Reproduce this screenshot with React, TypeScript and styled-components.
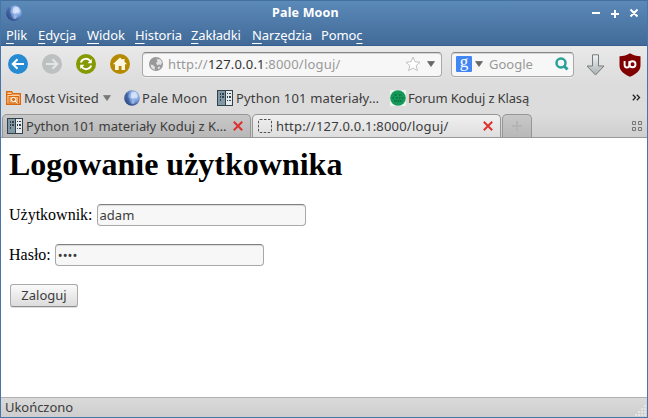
import React from 'react';
import styled, { createGlobalStyle } from 'styled-components';

const Global = createGlobalStyle`
  * { box-sizing: border-box; }
  body { margin: 0; overflow: hidden; }
`;

const Window = styled.div`
  width: 648px;
  height: 418px;
  display: flex;
  flex-direction: column;
  background: #fff;
  border: solid #4675aa;
  border-width: 0 1px 1px;
  font: 13px 'Noto Sans', sans-serif;
  color: #3c3c3c;
  overflow: hidden;
`;

const Header = styled.header`
  height: 46px;
  flex: none;
  background: linear-gradient(#5b89b8, #416a98);
  border-top: 1px solid #44709f;
  border-bottom: 1px solid #365f90;
  color: #fff;
`;

const TitleBar = styled.div`
  height: 23px;
  display: grid;
  grid-template-columns: 68px 1fr 100px;
  align-items: center;
  padding: 0 9px 0 5px;
`;

const Title = styled.div`
  text-align: center;
  font-weight: 700;
  font-size: 12.5px;
  padding-right: 1px;
  letter-spacing: 0.17px;
`;

const Controls = styled.div`
  display: flex;
  justify-content: flex-end;
`;

const Label = styled.span<{ $w: number; $ls?: number }>`
  width: ${(p) => p.$w}px;
  flex: none;
  white-space: nowrap;
  letter-spacing: ${(p) => p.$ls ?? 0}px;
  line-height: 18px;
`;

const MenuBar = styled.nav`
  height: 21px;
  display: flex;
  align-items: center;
  gap: 10px;
  padding-left: 5px;
  u { text-underline-offset: 3px; text-decoration-thickness: 1px; text-decoration-skip-ink: none; }
`;

const Toolbar = styled.div`
  height: 38px;
  flex: none;
  display: flex;
  align-items: center;
  padding: 0 5px 1px 7px;
  background: linear-gradient(#e9e9e9, #dcdcdc);
`;

const NavButtons = styled.div`
  display: flex;
  gap: 14px;
  width: 134px;
  flex: none;
  padding-bottom: 1px;
  svg { display: block; }
`;

const Field = styled.div<{ $w: number; $inset?: number }>`
  width: ${(p) => p.$w}px;
  height: 25px;
  flex: none;
  display: flex;
  align-items: center;
  background: #f7f7f7;
  border: 1px solid #a8a8a8;
  border-top-color: #858585;
  border-radius: 4px;
  box-shadow: inset 0 1px 0 #d5d5d5, 0 1px 0 #ececec;
  padding-left: ${(p) => p.$inset ?? 6}px;
  padding-bottom: 1px;
  color: #999;
  svg { flex: none; display: block; }
`;

const Host = styled.span`
  color: #333;
`;

const Bookmarks = styled.div`
  height: 30px;
  flex: none;
  display: flex;
  align-items: center;
  padding: 0 6px 3px 5px;
  background: #dcdcdc;
  svg { flex: none; }
`;

const Bookmark = styled.div<{ $w: number; $gap?: number }>`
  width: ${(p) => p.$w}px;
  flex: none;
  display: flex;
  align-items: center;
  gap: ${(p) => p.$gap ?? 3}px;
`;

const Overflow = styled.svg`
  margin-left: auto;
  margin-bottom: 1px;
`;

const TabStrip = styled.div`
  height: 24px;
  flex: none;
  display: flex;
  align-items: stretch;
  padding-left: 1px;
  background: linear-gradient(#dcdcdc, #cfcfcf);
  border-bottom: 1px solid #999;
`;

const Tab = styled.div<{ $w: number; $active?: boolean }>`
  width: ${(p) => p.$w}px;
  flex: none;
  display: flex;
  align-items: center;
  padding-left: 4px;
  margin-right: 1px;
  border: 1px solid #969696;
  border-bottom: 0;
  border-radius: 5px 5px 0 0;
  background: ${(p) => (p.$active ? 'linear-gradient(#f0f0f0, #dedede)' : 'linear-gradient(#c8c8c8, #b8b8b8)')};
  svg { flex: none; }
`;

const NewTab = styled(Tab)`
  padding: 0;
  justify-content: center;
`;

const GridIcon = styled.div`
  margin-left: auto;
  padding: 7px 5px 0 0;
  svg { display: block; }
`;

const Page = styled.main`
  flex: 1;
  padding: 0 8px;
  color: #000;
  font: 16px/20px 'Liberation Serif', serif;
`;

const Heading = styled.h1`
  margin: 8px 0 0;
  font-size: 32px;
  line-height: 37px;
`;

const Row = styled.div<{ $top: number }>`
  display: flex;
  align-items: center;
  gap: 4px;
  height: 22px;
  margin-top: ${(p) => p.$top}px;
`;

const Input = styled.input`
  width: 209px;
  height: 22px;
  padding: 0 2px;
  outline: 0;
  background: #f7f7f7;
  border: 1px solid #a8a8a8;
  border-top-color: #808080;
  border-radius: 4px;
  box-shadow: inset 0 1px 0 #dcdcdc;
  color: #3c3c3c;
  font: 13px 'Noto Sans', sans-serif;
`;

const Submit = styled.button`
  display: block;
  width: 68px;
  height: 23px;
  margin: 18px 0 0 1px;
  padding: 0 0 1px;
  background: linear-gradient(#fafafa, #dcdcdc);
  border: 1px solid #aaa;
  border-bottom-color: #8c8c8c;
  border-radius: 3px;
  box-shadow: 0 1px 0 #e0e0e0;
  color: #3c3c3c;
  font: 13px 'Noto Sans', sans-serif;
`;

const Status = styled.footer`
  height: 20px;
  flex: none;
  display: flex;
  align-items: center;
  justify-content: space-between;
  padding: 0 0 1px 4px;
  background: linear-gradient(#dadada, #cecece);
  border-top: 1px solid #b0b0b0;
  svg { align-self: flex-end; }
`;

const MoonIcon = () => (
  <svg width="16" height="16" viewBox="0 0 16 16">
    <defs>
      <radialGradient id="moon" cx=".65" cy=".35" r=".7">
        <stop offset="0" stopColor="#c9dcfa" />
        <stop offset=".5" stopColor="#7a9fdc" />
        <stop offset="1" stopColor="#234080" />
      </radialGradient>
    </defs>
    <circle cx="8" cy="8" r="7.8" fill="url(#moon)" />
    <path d="M8 1.500l4 .5 2 4-1.500 2.500-2-1L9 9 6.500 7.500 7 4z" fill="#e4eefc" opacity=".65" />
    <path d="M2 4.500l3-2-1 4 1.500 3L5 13 2 10z" fill="#2b4a88" opacity=".5" />
    <path d="M8 10l3 1-1 3-3-.5z" fill="#cbdcf8" opacity=".5" />
  </svg>
);

const ControlIcons = () => (
  <svg width="52" height="14" viewBox="0 0 52 14" stroke="#fff" strokeWidth="2" fill="none">
    <path d="M6 7h8M25 8h8M29 4v8M44.500 3.500l7 7M51.500 3.500l-7 7" />
  </svg>
);

const Disc = ({ color, children }: { color: string; children: React.ReactNode }) => (
  <svg width="20" height="20" viewBox="0 0 20 20" fill="none" stroke="#fff" strokeWidth="2.1">
    <circle cx="10" cy="10" r="10" fill={color} stroke="none" />
    {children}
  </svg>
);

const GlobeIcon = () => (
  <svg width="14" height="14" viewBox="0 0 14 14">
    <circle cx="7" cy="7" r="7" fill="#999" />
    <path d="M7.500 1.500l2 1 1.500-.5 2 3-1 3-2-.5-1.500 1L7 6l1.500-1.500zM1.500 7.500L4 8l2 2-.5 3-3-2zM8.500 10.500l2-1 1 .5-2 2.500z" fill="#e3e3e3" />
  </svg>
);

const StarIcon = () => (
  <svg width="16" height="16" viewBox="0 0 16 16">
    <path d="M8 1l2 4.700 5 .5-3.800 3.400 1.200 5L8 12l-4.400 2.600 1.200-5L1 6.200l5-.5z" fill="#fff" stroke="#c2c2c2" />
  </svg>
);

const Caret = ({ color = '#666' }: { color?: string }) => (
  <svg width="8" height="6" viewBox="0 0 8 6">
    <path d="M.5.500h7L4 5.500z" fill={color} stroke={color} strokeWidth=".7" />
  </svg>
);

const EngineMark = styled.span`
  width: 16px;
  height: 16px;
  flex: none;
  border-radius: 1px;
  background: #4285f4;
  color: #fff;
  font: 17px/12px 'Liberation Serif', serif;
  text-align: center;
`;

const Spacer = styled.span<{ $w: number }>`
  width: ${(p) => p.$w}px;
  flex: none;
`;

const SearchIcon = () => (
  <svg width="14" height="14" viewBox="0 0 14 14" fill="none" stroke="#2aa198" strokeWidth="2.500">
    <circle cx="6" cy="6" r="4.500" />
    <path d="M8.500 8.500l4 4" strokeWidth="3" />
  </svg>
);

const DownloadIcon = () => (
  <svg width="20" height="22" viewBox="0 0 20 22">
    <defs>
      <linearGradient id="arrow" x2="0" y2="1">
        <stop stopColor="#f2f4f4" />
        <stop offset="1" stopColor="#a9b0b2" />
      </linearGradient>
    </defs>
    <path d="M6.500.800h6V12h5.500L9.500 21 1 12h5.500z" fill="url(#arrow)" stroke="#747b7c" strokeLinejoin="round" />
  </svg>
);

const ShieldIcon = () => (
  <svg width="22" height="24" viewBox="0 0 22 24">
    <path d="M11 .300C14 2.400 17.500 3 21.500 3.200v9C21.500 17.500 17.500 21 11 23.700 4.500 21 .500 17.500.500 12.200v-9C4.500 3 8 2.400 11 .300z" fill="#800000" />
    <path d="M5.600 8v4q0 2.500 2.400 2.500T10.400 12V8" fill="none" stroke="#fff" strokeWidth="1.900" />
    <circle cx="13.500" cy="11.300" r="3" fill="none" stroke="#fff" strokeWidth="1.900" />
  </svg>
);

const FolderIcon = () => (
  <svg width="15" height="14" viewBox="0 0 15 14" fill="none" stroke="#d9680f">
    <path d="M.700 13.300V.700h5l1 2h7.600v10.600z" fill="#fbd3a8" strokeWidth="1.400" />
    <path d="M1 3.500h5" />
    <rect x="3" y="5.500" width="9.500" height="6.500" fill="#f0b070" />
    <circle cx="7.500" cy="8.500" r="2.100" fill="#d9680f" stroke="#fff" />
    <path d="M9 10l2.500 2.500" stroke="#fff" />
  </svg>
);

const BookIcon = () => (
  <svg width="16" height="16" viewBox="0 0 16 16" shapeRendering="crispEdges">
    <rect width="16" height="16" fill="#33434d" />
    <rect x="1" y="1" width="7" height="14" fill="#8298a5" />
    <rect x="9" y="1" width="6" height="14" fill="#e6e9ea" />
    <path d="M3 3h1v2h-1zM5 3h2v2h-2zM3 6h1v2h-1zM5 6h2v2h-2zM3 9h1v2h-1zM10 3h1v1h-1zM12 3h2v1h-2zM10 6h1v2h-1zM12 6h2v2h-2zM10 10h1v1h-1zM12 10h2v1h-2z" fill="#33434d" />
  </svg>
);

const ForumIcon = () => (
  <svg width="16" height="16" viewBox="0 0 16 16">
    <rect width="16" height="16" fill="#edf5ef" />
    <circle cx="8" cy="8" r="7.800" fill="#159858" />
    <path d="M4.500 5h2.500M9 5h2.500M2.500 8h2M6 8h1.500M9 8h1.500M12 8h1.500M4 11h8" stroke="#075b35" strokeWidth="1.100" strokeDasharray="1.500 .5" />
  </svg>
);

const CloseIcon = () => (
  <svg width="10" height="10" viewBox="0 0 10 10">
    <path d="M.8.800l8.400 8.400M9.200.800L.8 9.200" stroke="#dc322f" strokeWidth="2" />
  </svg>
);

const MENUS: [string, number, number][] = [
  ['Plik', 0, 22],
  ['Edycja', 0, 39],
  ['Widok', 0, 38],
  ['Historia', 0, 46],
  ['Zakładki', 0, 51],
  ['Narzędzia', 0, 59],
  ['Pomoc', 4, 42],
];

export default function App() {
  return (
    <Window>
      <Global />
      <Header>
        <TitleBar>
          <MoonIcon />
          <Title>Pale Moon</Title>
          <Controls><ControlIcons /></Controls>
        </TitleBar>
        <MenuBar>
          {MENUS.map(([name, key, width]) => (
            <Label key={name} $w={width} $ls={-0.1}>
              {name.slice(0, key)}<u>{name[key]}</u>{name.slice(key + 1)}
            </Label>
          ))}
        </MenuBar>
      </Header>
      <Toolbar>
        <NavButtons>
          <Disc color="#268bd2"><path d="M16 10H5.500M9.500 5.300L4.800 10l4.700 4.700" /></Disc>
          <Disc color="#bcc0c1"><path stroke="#e4e6e6" d="M4 10h10.500M10.500 5.300l4.700 4.700-4.700 4.700" /></Disc>
          <Disc color="#859900">
            <path d="M4.800 8.500a5.400 5.400 0 0 1 9.600-1.300M15.200 11.500a5.400 5.400 0 0 1-9.600 1.300" strokeWidth="1.900" />
            <path d="M15.800 5v4.300h-4.300zM4.200 15v-4.300h4.300z" fill="#fff" stroke="none" />
          </Disc>
          <Disc color="#b58900"><path d="M10 3.500L2.800 10.200H5V16h3.700v-4h2.800v4H15v-5.800h2.200l-2.700-2.500V5h-2v.800z" fill="#fdf6e3" stroke="none" /></Disc>
        </NavButtons>
        <Field $w={300}>
          <GlobeIcon />
          <Spacer $w={5} />
          <Label $w={237} $ls={0.19}>http://<Host>127.0.0.1</Host>:8000/loguj/</Label>
          <StarIcon />
          <Spacer $w={6} />
          <Caret />
        </Field>
        <Spacer $w={9} />
        <Field $w={123} $inset={4}>
          <EngineMark>g</EngineMark>
          <Spacer $w={3} />
          <Caret />
          <Spacer $w={6} />
          <Label $w={66}>Google</Label>
          <SearchIcon />
        </Field>
        <Spacer $w={12} />
        <DownloadIcon />
        <Spacer $w={13} />
        <ShieldIcon />
      </Toolbar>
      <Bookmarks>
        <Bookmark $w={118}><FolderIcon /><Label $w={76}>Most Visited</Label><Caret color="#777" /></Bookmark>
        <Bookmark $w={93} $gap={2}><MoonIcon /><Label $w={70} $ls={0.05}>Pale Moon</Label></Bookmark>
        <Bookmark $w={173}><BookIcon /><Label $w={146} $ls={0.18}>Python 101 materiały…</Label></Bookmark>
        <Bookmark $w={170} $gap={2}><ForumIcon /><Label $w={130} $ls={-0.15}>Forum Koduj z Klasą</Label></Bookmark>
        <Overflow width="9" height="7" viewBox="0 0 9 7" fill="none" stroke="#222" strokeWidth="1.300">
          <path d="M.8.800l2.700 2.700L.8 6.200M4.800.800l2.700 2.700-2.700 2.700" />
        </Overflow>
      </Bookmarks>
      <TabStrip>
        <Tab $w={249}><BookIcon /><Spacer $w={3} /><Label $w={207} $ls={0.03}>Python 101 materiały Koduj z K…</Label><CloseIcon /></Tab>
        <Tab $w={249} $active>
          <Spacer $w={1} />
          <svg width="14" height="14" viewBox="0 0 14 14"><rect x=".5" y=".5" width="13" height="13" rx="1.500" fill="none" stroke="#555" strokeDasharray="2.500 1.500" /></svg>
          <Spacer $w={4} /><Label $w={207} $ls={0.19}>http://127.0.0.1:8000/loguj/</Label><CloseIcon />
        </Tab>
        <NewTab $w={30}>
          <svg width="10" height="10" viewBox="0 0 10 10"><path d="M0 5h10M5 0v10" stroke="#b4b4b4" strokeWidth="2" /></svg>
        </NewTab>
        <GridIcon>
          <svg width="10" height="10" viewBox="0 0 10 10" fill="none" stroke="#777"><path d="M.5.500h3v3h-3zM6.500.500h3v3h-3zM.5 6.500h3v3h-3zM6.500 6.500h3v3h-3z" /></svg>
        </GridIcon>
      </TabStrip>
      <Page>
        <Heading>Logowanie użytkownika</Heading>
        <Row $top={21}><label htmlFor="user">Użytkownik:</label><Input id="user" defaultValue="adam" /></Row>
        <Row $top={18}><label htmlFor="pass">Hasło:</label><Input id="pass" type="password" defaultValue="adam" /></Row>
        <Submit>Zaloguj</Submit>
      </Page>
      <Status>
        <Label $w={80} $ls={-0.05}>Ukończono</Label>
        <svg width="12" height="12" viewBox="0 0 12 12"><path d="M9 2h2M6 5h2M9 5h2M3 8h2M6 8h2M9 8h2M0 11h2M3 11h2M6 11h2M9 11h2" stroke="#e6e6e6" strokeWidth="2" /></svg>
      </Status>
    </Window>
  );
}
